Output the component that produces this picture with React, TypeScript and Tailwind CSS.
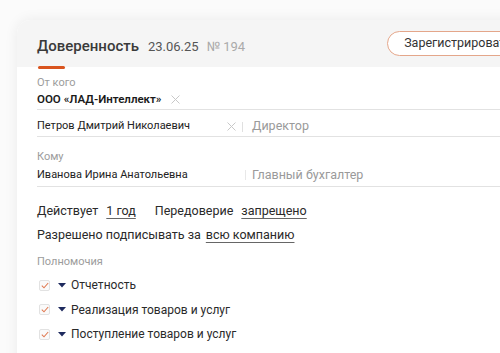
import React from "react";

const XIcon = () => (
  <svg width="9" height="9" viewBox="0 0 9 9" className="shrink-0">
    <path d="M0.5 0.5 L8.5 8.5 M8.5 0.5 L0.5 8.5" stroke="#c8c8c8" strokeWidth="1" />
  </svg>
);

const Check = () => (
  <span className="w-[11px] h-[11px] rounded-[2px] border border-[#e2e2e2] bg-[#fafafa] flex items-center justify-center shrink-0">
    <svg width="8" height="7" viewBox="0 0 8 7">
      <path d="M0.8 3.6 L3 5.8 L7.2 1" stroke="#e07a52" strokeWidth="1.1" fill="none" />
    </svg>
  </span>
);

const Caret = () => (
  <svg width="8" height="5" viewBox="0 0 8 5" className="shrink-0">
    <path d="M0 0 L8 0 L4 4.5 Z" fill="#1e2a5e" />
  </svg>
);

const Item = ({ text }: { text: string }) => (
  <div className="flex items-center h-[18px] pl-[2px]">
    <Check />
    <span className="ml-[8px] flex"><Caret /></span>
    <span className="ml-[5px] text-[12px] text-[#2a2a2a]">{text}</span>
  </div>
);

export default function App() {
  return (
    <div
      className="w-[500px] h-[353px] overflow-hidden bg-[#fbfbfb]"
      style={{ fontFamily: "Roboto, 'Noto Sans', sans-serif" }}
    >
      <div className="ml-[17px] mt-[20px] w-[620px] h-[400px] rounded-tl-[14px] bg-white shadow-[0_0_14px_rgba(0,0,0,0.07)] overflow-hidden">
        <div className="relative h-[47px] bg-[#f5f5f5] flex items-center px-[20px]">
          <div className="flex items-baseline mt-[5px]">
            <span className="text-[15px] font-medium text-[#3a3a3a]">Доверенность</span>
            <span className="ml-[9px] text-[13px] text-[#555]">23.06.25</span>
            <span className="ml-[8px] text-[13px] text-[#aaa]">№ 194</span>
          </div>
          <span className="absolute left-[21px] top-[46px] w-[27px] h-[3px] bg-[#d9541e] rounded-full" />
          <div className="ml-[142px] h-[25px] rounded-full border border-[#e4a68a] bg-white flex items-center pl-[16px] pr-[17px]">
            <span className="text-[12.5px] text-[#333] whitespace-nowrap">Зарегистрировать</span>
          </div>
        </div>

        <div className="px-[20px] pt-[9px]">
          <div className="text-[11px] leading-[14px] text-[#9c9c9c]">От кого</div>
          <div className="h-[20px] flex items-center border-b border-[#e2e2e2] w-[480px]">
            <span className="text-[11.5px] font-semibold text-[#1a1a1a]">ООО «ЛАД-Интеллект»</span>
            <span className="ml-[9px] flex"><XIcon /></span>
          </div>

          <div className="h-[27px] pt-[7px] flex items-center border-b border-[#e2e2e2] w-[480px]">
            <div className="w-[205px] flex items-center justify-between pr-[6px]">
              <span className="text-[11px] text-[#222]">Петров Дмитрий Николаевич</span>
              <XIcon />
            </div>
            <span className="w-px h-[10px] bg-[#e0e0e0]" />
            <span className="ml-[9px] text-[12.5px] text-[#9a9a9a]">Директор</span>
          </div>

          <div className="mt-[13px] text-[11px] leading-[14px] text-[#9c9c9c]">Кому</div>
          <div className="h-[23px] flex items-center border-b border-[#e2e2e2] w-[480px]">
            <div className="w-[208px] flex items-center">
              <span className="text-[11px] text-[#222]">Иванова Ирина Анатольевна</span>
            </div>
            <span className="w-px h-[10px] bg-[#e8e8e8]" />
            <span className="ml-[6px] text-[12.5px] text-[#9a9a9a]">Главный бухгалтер</span>
          </div>

          <div className="mt-[15px] flex items-center h-[18px] text-[12.5px] text-[#2a2a2a]">
            <span>Действует</span>
            <span className="ml-[8px] underline underline-offset-[3px] decoration-[#666]">1 год</span>
            <span className="ml-[19px]">Передоверие</span>
            <span className="ml-[8px] underline underline-offset-[3px] decoration-[#666]">запрещено</span>
          </div>
          <div className="mt-[6px] flex items-center h-[18px] text-[12.5px] text-[#2a2a2a]">
            <span>Разрешено подписывать за</span>
            <span className="ml-[5px] underline underline-offset-[3px] decoration-[#666]">всю компанию</span>
          </div>

          <div className="mt-[11px] text-[11px] leading-[14px] text-[#9c9c9c]">Полномочия</div>
          <div className="mt-[7px] flex flex-col gap-[6.5px]">
            <Item text="Отчетность" />
            <Item text="Реализация товаров и услуг" />
            <Item text="Поступление товаров и услуг" />
          </div>
        </div>
      </div>
    </div>
  );
}
